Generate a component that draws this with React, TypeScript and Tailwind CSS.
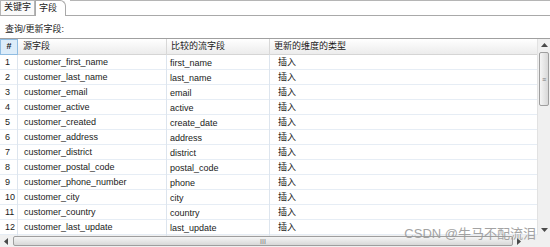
import React from 'react'

const rows = [
  ['customer_first_name', 'first_name'],
  ['customer_last_name', 'last_name'],
  ['customer_email', 'email'],
  ['customer_active', 'active'],
  ['customer_created', 'create_date'],
  ['customer_address', 'address'],
  ['customer_district', 'district'],
  ['customer_postal_code', 'postal_code'],
  ['customer_phone_number', 'phone'],
  ['customer_city', 'city'],
  ['customer_country', 'country'],
  ['customer_last_update', 'last_update'],
]

const Arrow = ({ dir }: { dir: 'up' | 'down' | 'left' | 'right' }) => {
  const pts = {
    up: '0,5 3.5,1 7,5',
    down: '0,2 3.5,6 7,2',
    left: '5,0 1,3.5 5,7',
    right: '2,0 6,3.5 2,7',
  }[dir]
  return (
    <svg width="7" height="7" viewBox="0 0 7 7">
      <polygon points={pts} fill="#4a4a4a" />
    </svg>
  )
}

const App = () => {
  return (
    <div
      className="relative w-[550px] h-[247px] overflow-hidden bg-white text-[9px] text-[#1a1a1a]"
      style={{ fontFamily: '"Liberation Sans", "Noto Sans CJK SC", sans-serif' }}
    >
      {/* tabs */}
      <div className="flex h-[16px] items-end border-b border-[#a9a9a9]">
        <div className="flex h-[15px] items-center border border-b-0 border-[#b5b5b5] bg-[#fafafa] px-[3px]">关键字</div>
        <div className="flex h-[16px] items-center border border-b-0 border-[#a9a9a9] bg-white pl-[3px] pr-[8px] -mb-px rounded-tr-[6px]">字段</div>
        <div className="flex-1 self-start border-t border-[#b5b5b5] ml-[4px]"></div>
      </div>

      <div className="flex h-[22px] items-center pl-[5px] pt-[6px]">查询/更新字段:</div>

      {/* table */}
      <div className="flex border-t border-[#a0a0a0]">
        <div className="flex-1">
          <div className="grid h-[16px] grid-cols-[18px_149px_103px_1fr] border-b border-[#d5d5d5] bg-gradient-to-b from-[#ffffff] to-[#ececec]">
            <div className="flex items-center justify-center border border-[#8fbce2] bg-[#dcecf9] font-bold">#</div>
            <div className="flex items-center border-r border-[#d8d8d8] pl-[5px]">源字段</div>
            <div className="flex items-center border-r border-[#d8d8d8] pl-[4px]">比较的流字段</div>
            <div className="flex items-center pl-[4px]">更新的维度的类型</div>
          </div>
          {rows.map((r, i) => (
            <div key={i} className="grid h-[15px] grid-cols-[18px_149px_103px_1fr] border-b border-[#e6edf5]">
              <div className="flex items-center pl-[5px] border-r border-[#dde5ee]">{i + 1}</div>
              <div className="flex items-center border-r border-[#dde5ee] pl-[6px] pb-[1px]">{r[0]}</div>
              <div className="flex items-center border-r border-[#dde5ee] pl-[3px] pt-[2px]">{r[1]}</div>
              <div className="flex items-center pl-[8px]">插入</div>
            </div>
          ))}
        </div>

        {/* vertical scrollbar */}
        <div className="flex w-[13px] flex-col bg-[#f0f0f0] border-l border-[#e2e2e2]">
          <div className="flex h-[13px] items-center justify-center">
            <Arrow dir="up" />
          </div>
          <div className="mx-[1px] flex h-[54px] items-center justify-center rounded-[2px] border border-[#9e9e9e] bg-gradient-to-r from-[#f5f5f5] to-[#d8d8d8] text-[7px] leading-none text-[#777]">≡</div>
          <div className="flex-1"></div>
          <div className="flex h-[12px] items-center justify-center">
            <Arrow dir="down" />
          </div>
        </div>
      </div>

      {/* horizontal scrollbar */}
      <div className="flex h-[12px] bg-[#f0f0f0]">
        <div className="flex w-[13px] items-center justify-center">
          <Arrow dir="left" />
        </div>
        <div className="my-[1px] flex w-[500px] items-center justify-center rounded-[2px] border border-[#9e9e9e] bg-gradient-to-b from-[#f5f5f5] to-[#d8d8d8] text-[7px] leading-none text-[#777]">III</div>
        <div className="flex w-[11px] items-center justify-center">
          <Arrow dir="right" />
        </div>
        <div className="flex-1 bg-[#f0f0f0]"></div>
      </div>

      <div className="absolute right-[14px] bottom-[7px] text-[13px] text-[#9a9a9a] leading-none opacity-90">CSDN @牛马不配流泪</div>
    </div>
  )
}

export default App
